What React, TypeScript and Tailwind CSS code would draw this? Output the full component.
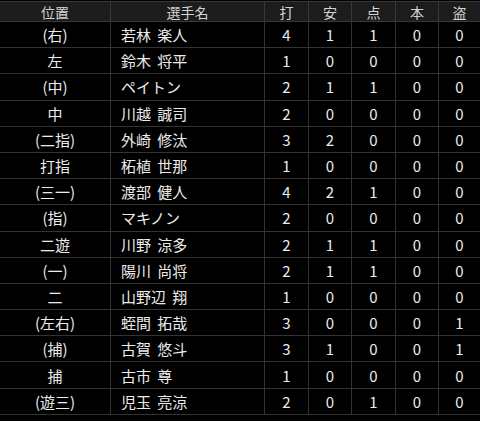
import React from "react";

type Row = { pos: string; name: string; stats: number[] };

const rows: Row[] = [
  { pos: "(右)", name: "若林 楽人", stats: [4, 1, 1, 0, 0] },
  { pos: "左", name: "鈴木 将平", stats: [1, 0, 0, 0, 0] },
  { pos: "(中)", name: "ペイトン", stats: [2, 1, 1, 0, 0] },
  { pos: "中", name: "川越 誠司", stats: [2, 0, 0, 0, 0] },
  { pos: "(二指)", name: "外崎 修汰", stats: [3, 2, 0, 0, 0] },
  { pos: "打指", name: "柘植 世那", stats: [1, 0, 0, 0, 0] },
  { pos: "(三一)", name: "渡部 健人", stats: [4, 2, 1, 0, 0] },
  { pos: "(指)", name: "マキノン", stats: [2, 0, 0, 0, 0] },
  { pos: "二遊", name: "川野 涼多", stats: [2, 1, 1, 0, 0] },
  { pos: "(一)", name: "陽川 尚将", stats: [2, 1, 1, 0, 0] },
  { pos: "二", name: "山野辺 翔", stats: [1, 0, 0, 0, 0] },
  { pos: "(左右)", name: "蛭間 拓哉", stats: [3, 0, 0, 0, 1] },
  { pos: "(捕)", name: "古賀 悠斗", stats: [3, 1, 0, 0, 1] },
  { pos: "捕", name: "古市 尊", stats: [1, 0, 0, 0, 0] },
  { pos: "(遊三)", name: "児玉 亮涼", stats: [2, 0, 1, 0, 0] },
];

const heads = ["打", "安", "点", "本", "盗"];

const cols = "grid grid-cols-[111px_154px_44px_43px_44px_43px_1fr]";

const App: React.FC = () => {
  return (
    <div
      className="w-[480px] h-[421px] bg-black pt-px overflow-hidden"
      style={{ fontFamily: '"Noto Sans CJK JP", "Noto Sans", sans-serif' }}
    >
      {/* header */}
      <div className={`${cols} h-[21px] bg-[#1c1c1c] border-t border-b border-[#383838] text-[14px] text-[#d4d4d4] leading-none`}>
        <div className="flex items-center justify-center border-r border-[#383838]">位置</div>
        <div className="flex items-center justify-center border-r border-[#383838]">選手名</div>
        {heads.map((h, i) => (
          <div
            key={h}
            className={`flex items-center justify-center ${i < 4 ? "border-r border-[#383838]" : ""}`}
          >
            {h}
          </div>
        ))}
      </div>

      {/* body */}
      {rows.map((r) => (
        <div
          key={r.name}
          className={`${cols} h-[26.2px] border-b border-[#333333] text-[15px] text-[#ececec] leading-none`}
        >
          <div className="flex items-center justify-center border-r border-[#333333]">{r.pos}</div>
          <div className="flex items-center pl-[10px] border-r border-[#333333] whitespace-pre [word-spacing:3px]">{r.name}</div>
          {r.stats.map((s, i) => (
            <div
              key={i}
              className={`flex items-center justify-center ${i < 4 ? "border-r border-[#333333]" : ""}`}
            >
              {s}
            </div>
          ))}
        </div>
      ))}
    </div>
  );
};

export default App;
